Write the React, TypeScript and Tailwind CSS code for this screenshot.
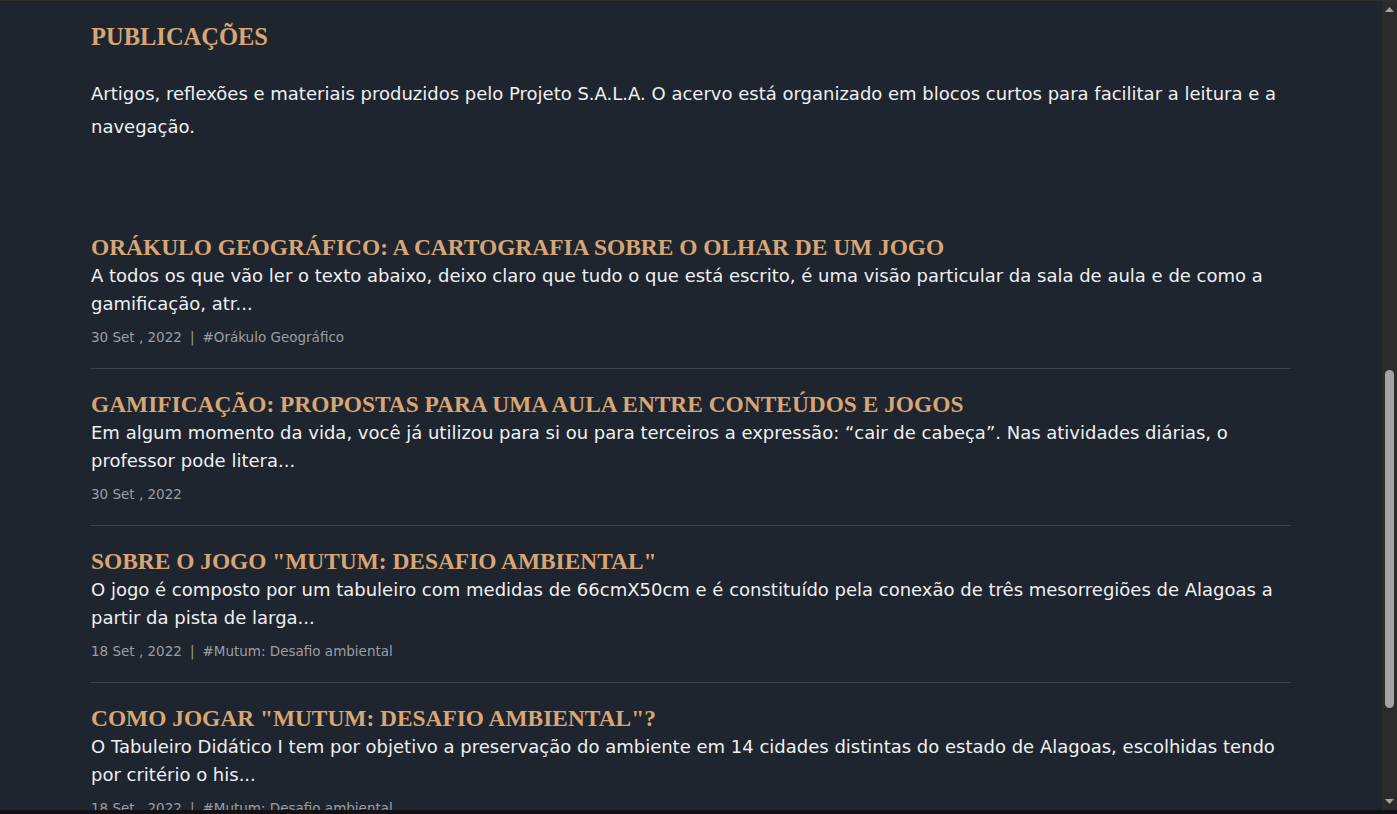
import React from "react";

type Post = { title: string; lines: string; meta: string; tag?: string };

const posts: Post[] = [
  {
    title: "ORÁKULO GEOGRÁFICO: A CARTOGRAFIA SOBRE O OLHAR DE UM JOGO",
    lines:
      "A todos os que vão ler o texto abaixo, deixo claro que tudo o que está escrito, é uma visão particular da sala de aula e de como a gamificação, atr...",
    meta: "30 Set , 2022",
    tag: "#Orákulo Geográfico",
  },
  {
    title: "GAMIFICAÇÃO: PROPOSTAS PARA UMA AULA ENTRE CONTEÚDOS E JOGOS",
    lines:
      "Em algum momento da vida, você já utilizou para si ou para terceiros a expressão: “cair de cabeça”. Nas atividades diárias, o professor pode litera...",
    meta: "30 Set , 2022",
  },
  {
    title: 'SOBRE O JOGO "MUTUM: DESAFIO AMBIENTAL"',
    lines:
      "O jogo é composto por um tabuleiro com medidas de 66cmX50cm e é constituído pela conexão de três mesorregiões de Alagoas a partir da pista de larga...",
    meta: "18 Set , 2022",
    tag: "#Mutum: Desafio ambiental",
  },
  {
    title: 'COMO JOGAR "MUTUM: DESAFIO AMBIENTAL"?',
    lines:
      "O Tabuleiro Didático I tem por objetivo a preservação do ambiente em 14 cidades distintas do estado de Alagoas, escolhidas tendo por critério o his...",
    meta: "18 Set , 2022",
    tag: "#Mutum: Desafio ambiental",
  },
];

const serif = { fontFamily: '"Liberation Serif", "DejaVu Serif", serif' };
const sans = { fontFamily: '"DejaVu Sans", "Liberation Sans", sans-serif' };

export default function App() {
  return (
    <div className="h-[814px] w-full flex flex-col bg-[#111116] overflow-hidden">
      <div className="h-px bg-[#2e2e2e]" />
      <div className="flex-1 flex min-h-0">
        <main className="flex-1 min-w-0 bg-[#1f252e] overflow-hidden">
          <div className="max-w-[1200px] mx-auto pt-5">
            <h1
              className="text-[24.5px] leading-[32px] font-bold text-[#d8a675]"
              style={serif}
            >
              PUBLICAÇÕES
            </h1>
            <p
              className="mt-6 text-[18px] leading-[33px] text-[#eef0f2]"
              style={sans}
            >
              Artigos, reflexões e materiais produzidos pelo Projeto S.A.L.A. O acervo está organizado em blocos curtos para facilitar a leitura e a navegação.
            </p>
            <div className="mt-[69px] flex flex-col">
              {posts.map((p, i) => (
                <article
                  key={i}
                  className="pt-5 pb-[21px] border-b border-[#3d434b]"
                >
                  <h2
                    className="text-[23.4px] leading-[30px] font-bold text-[#d8a675]"
                    style={serif}
                  >
                    {p.title}
                  </h2>
                  <p
                    className="text-[18px] leading-[28px] text-[#eef0f2]"
                    style={sans}
                  >
                    {p.lines}
                  </p>
                  <div
                    className="mt-[9px] text-[13.5px] leading-[20px] text-[#9a9fa6]"
                    style={sans}
                  >
                    {p.meta}
                    {p.tag && (
                      <>
                        <span className="mx-[8px]">|</span>
                        {p.tag}
                      </>
                    )}
                  </div>
                </article>
              ))}
            </div>
          </div>
        </main>
        <div className="w-[15px] bg-[#2b2b2b] flex flex-col items-center">
          <svg width="9" height="5" viewBox="0 0 9 5" className="mt-[6px]">
            <polygon points="4.5,0 9,5 0,5" fill="#a3a3a3" />
          </svg>
          <div className="mt-[358px] h-[338px] w-[9px] rounded-full bg-[#a3a3a3]" />
          <div className="flex-1" />
          <svg width="9" height="5" viewBox="0 0 9 5" className="mb-[6px]">
            <polygon points="0,0 9,0 4.5,5" fill="#a3a3a3" />
          </svg>
        </div>
      </div>
      <div className="h-[4px] bg-[#111116]" />
    </div>
  );
}
